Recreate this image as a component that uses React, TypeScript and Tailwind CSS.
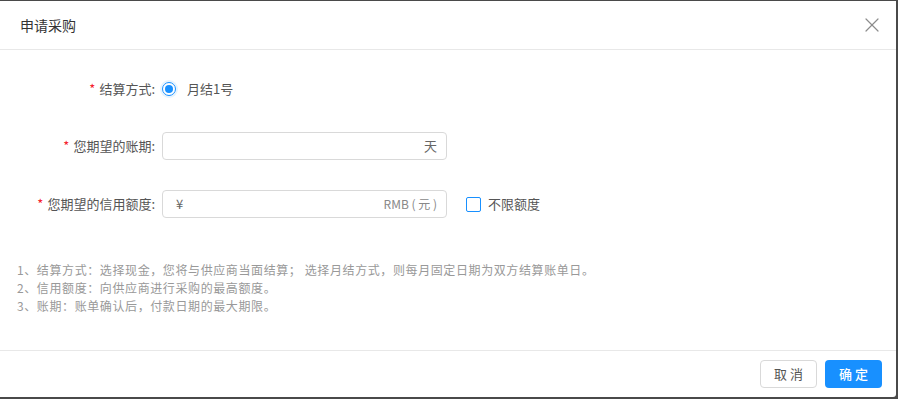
import { X } from 'lucide-react';

function Label({ text }: { text: string }) {
  return (
    <div className="w-[155px] shrink-0 text-right text-[13px] text-[#555]">
      <span className="mr-[4px] text-[#f5222d]">*</span>
      {text}
    </div>
  );
}

export default function App() {
  const notes = [
    '1、结算方式：选择现金，您将与供应商当面结算； 选择月结方式，则每月固定日期为双方结算账单日。',
    '2、信用额度：向供应商进行采购的最高额度。',
    '3、账期：账单确认后，付款日期的最大期限。',
  ];

  return (
    <div
      className="w-[898px] h-[399px] bg-[#4a4a4a] pt-[1px] pr-[2px] pb-[2px] overflow-hidden"
      style={{ fontFamily: '"Noto Sans CJK SC", "Noto Sans", sans-serif' }}
    >
      <div className="h-full bg-white rounded-br-[3px] flex flex-col">
        {/* header */}
        <div className="h-[49px] shrink-0 border-b border-[#e8e8e8] flex items-center justify-between pl-[20px] pr-[12px]">
          <span className="text-[14px] text-[#333]">申请采购</span>
          <X size={24} strokeWidth={1.2} className="text-[#8c8c8c]" />
        </div>

        {/* body */}
        <div className="flex-1 pt-[25px]">
          <div className="h-[28px] flex items-center">
            <Label text="结算方式:" />
            <div className="ml-[7px] flex items-center">
              <span className="w-[14px] h-[14px] rounded-full border border-[#1890ff] flex items-center justify-center shadow-[0_0_0_2px_#e6f4ff]">
                <span className="w-[8px] h-[8px] rounded-full bg-[#1890ff]" />
              </span>
              <span className="ml-[11px] text-[13px] text-[#555]">月结1号</span>
            </div>
          </div>

          <div className="h-[28px] flex items-center mt-[29px]">
            <Label text="您期望的账期:" />
            <div className="ml-[7px] w-[285px] h-[28px] border border-[#d9d9d9] rounded-[4px] flex items-center justify-end pr-[9px]">
              <span className="text-[13px] text-[#666]">天</span>
            </div>
          </div>

          <div className="h-[28px] flex items-center mt-[30px]">
            <Label text="您期望的信用额度:" />
            <div className="ml-[7px] w-[285px] h-[28px] border border-[#d9d9d9] rounded-[4px] flex items-center justify-between pl-[13px] pr-[9px]">
              <span className="text-[13px] text-[#666]">¥</span>
              <span className="text-[12px] text-[#888]">RMB ( 元 )</span>
            </div>
            <span className="ml-[19px] w-[15px] h-[15px] border border-[#1890ff] rounded-[2px]" />
            <span className="ml-[7px] text-[13px] text-[#555]">不限额度</span>
          </div>

          <div className="mt-[43px] pl-[17px] text-[12px] leading-[18px] tracking-[0.6px] text-[#999]">
            {notes.map((n) => (
              <div key={n}>{n}</div>
            ))}
          </div>
        </div>

        {/* footer */}
        <div className="h-[47px] shrink-0 border-t border-[#e8e8e8] flex items-center justify-end gap-[8px] pr-[14px]">
          <button className="w-[57px] h-[28px] border border-[#d9d9d9] rounded-[4px] text-[13px] text-[#555] tracking-[3px] pl-[3px]">
            取消
          </button>
          <button className="w-[57px] h-[28px] bg-[#1890ff] rounded-[4px] text-[13px] text-white font-medium tracking-[3px] pl-[3px]">
            确定
          </button>
        </div>
      </div>
    </div>
  );
}
